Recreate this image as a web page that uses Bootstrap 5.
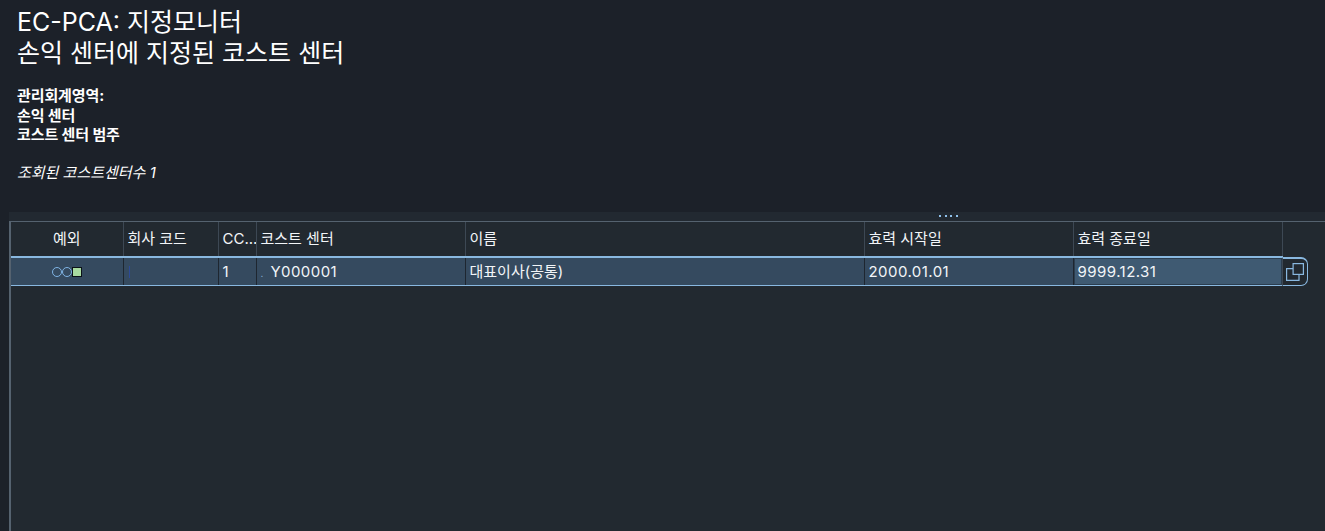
<!DOCTYPE html>
<html lang="ko">
<head>
<meta charset="utf-8">
<title>EC-PCA</title>
<link href="https://cdn.jsdelivr.net/npm/bootstrap@5.3.0/dist/css/bootstrap.min.css" rel="stylesheet">
<style>
html,body{height:100%;}
body{background:#1c2129;color:#fff;font-family:Inter,"Noto Sans CJK KR",sans-serif;overflow:hidden;}
.page-head{height:212px;padding:7px 17px 0;}
.title-line{font-size:25px;line-height:31px;font-weight:400;margin:0;}
.filter-block{margin-top:17px;font-size:15px;line-height:19.5px;font-weight:700;letter-spacing:-.1px;}
.count-line{margin-top:18px;font-size:15px;line-height:20px;font-style:italic;}
.sash{height:9px;background:#222931;margin-left:9px;display:flex;justify-content:flex-start;align-items:center;gap:3.5px;padding-left:930px;padding-bottom:1px;}
.sash i{width:2px;height:2px;background:#8fc0ea;display:block;}
.grid-wrap{margin-left:9px;height:310px;background:#222930;border-left:2px solid #55626f;}
.data-grid{table-layout:fixed;border-collapse:collapse;width:1314px;font-size:15px;color:#f2f5f8;}
.data-grid th{font-weight:400;height:35px;padding:0 4px;border-top:1px solid #55626f;border-left:1px solid #3d4854;white-space:nowrap;overflow:hidden;}
.data-grid th:first-child{border-left:0;}
.data-grid thead tr{height:35px;}
.data-grid td{height:29px;padding:1px 4px 0;background:#354a5f;border-top:2px solid #89b8e0;border-bottom:1px solid #89b8e0;border-left:1px solid #1e2630;white-space:nowrap;overflow:hidden;}
.data-grid td:first-child{border-left:0;}
.data-grid td.date-cell-end{background:#3f5a72;box-shadow:inset 0 0 0 1px #2b3d4f;}
.data-grid td.tail-cell{background:transparent;padding:0;border:0;position:relative;}
.num-text{letter-spacing:.45px;}
.tail-btn{display:flex;align-items:center;justify-content:flex-start;width:26px;height:29px;border:1px solid #89b8e0;border-left:1px solid #3d4854;border-top-width:2px;border-radius:0 7px 7px 0;padding:0 0 0 3px;background:#222930;}
.status-dots{display:inline-flex;align-items:center;margin-left:1px;}
.ring{width:10px;height:10px;border:1px solid #7fb4e4;border-radius:50%;display:block;}
.sq{width:10px;height:10px;background:#a9dba0;border:1px solid #0c1218;display:block;}
.key-mark{color:#8fb8dc;font-size:10px;margin-right:7px;}
.co-mark{display:block;width:1px;height:12px;background:#2c4a96;margin-left:1px;}
</style>
</head>
<body>
<header class="page-head">
  <h1 class="title-line">EC-PCA: 지정모니터</h1>
  <h1 class="title-line">손익 센터에 지정된 코스트 센터</h1>
  <div class="filter-block">
    <div>관리회계영역:</div>
    <div>손익 센터</div>
    <div>코스트 센터 범주</div>
  </div>
  <div class="count-line">조회된 코스트센터수 1</div>
</header>
<div class="sash"><i></i><i></i><i></i><i></i></div>
<div class="grid-wrap">
  <table class="data-grid">
    <colgroup>
      <col style="width:112px"><col style="width:95px"><col style="width:38px"><col style="width:209px"><col style="width:399px"><col style="width:209px"><col style="width:209px"><col style="width:43px">
    </colgroup>
    <thead>
      <tr>
        <th class="text-center">예외</th>
        <th>회사 코드</th>
        <th>CC...</th>
        <th>코스트 센터</th>
        <th>이름</th>
        <th>효력 시작일</th>
        <th>효력 종료일</th>
        <th></th>
      </tr>
    </thead>
    <tbody>
      <tr>
        <td class="text-center"><span class="status-dots"><span class="ring"></span><span class="ring"></span><span class="sq"></span></span></td>
        <td><span class="co-mark"></span></td>
        <td>1</td>
        <td><span class="key-mark">.</span><span class="num-text">Y000001</span></td>
        <td>대표이사(공통)</td>
        <td class="num-text">2000.01.01</td>
        <td class="date-cell-end num-text">9999.12.31</td>
        <td class="tail-cell">
          <span class="tail-btn">
            <svg width="18" height="18" viewBox="0 0 18 18" fill="none" stroke="#89b8e0" stroke-width="1.2" aria-hidden="true"><rect x="7.1" y="0.6" width="10.3" height="10.8"/><path d="M7.1 5.6H0.6V17.4H13V11.4"/></svg>
          </span>
        </td>
      </tr>
    </tbody>
  </table>
</div>
<script src="https://cdn.jsdelivr.net/npm/bootstrap@5.3.0/dist/js/bootstrap.bundle.min.js"></script>
</body>
</html>
